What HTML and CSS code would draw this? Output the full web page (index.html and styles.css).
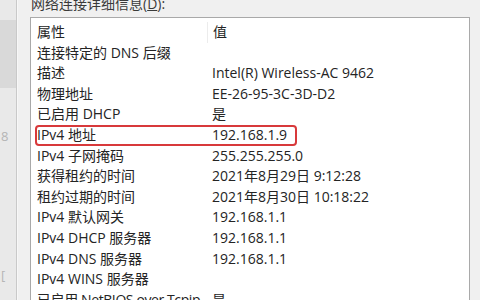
FILE: index.html
```html
<!DOCTYPE html>
<html lang="zh-CN">
<head>
    <meta charset="UTF-8">
    <title>网络连接详细信息</title>
    <link rel="stylesheet" href="styles.css">
</head>
<body>
    <div class="backdrop">
        <div class="backdrop-band"></div>
        <span class="ghost ghost-top">8</span>
        <span class="ghost ghost-bottom">[</span>
    </div>

    <div class="dialog">
        <div class="caption">网络连接详细信息(<u>D</u>):</div>

        <div class="listbox">
            <div class="row head">
                <span class="name">属性</span>
                <span class="value">值</span>
            </div>
            <div class="row"><span class="name">连接特定的 DNS 后缀</span><span class="value"></span></div>
            <div class="row"><span class="name">描述</span><span class="value">Intel(R) Wireless-AC 9462</span></div>
            <div class="row"><span class="name">物理地址</span><span class="value">EE-26-95-3C-3D-D2</span></div>
            <div class="row"><span class="name">已启用 DHCP</span><span class="value">是</span></div>
            <div class="row marked"><span class="name">IPv4 地址</span><span class="value">192.168.1.9</span></div>
            <div class="row"><span class="name">IPv4 子网掩码</span><span class="value">255.255.255.0</span></div>
            <div class="row"><span class="name">获得租约的时间</span><span class="value">2021年8月29日 9:12:28</span></div>
            <div class="row"><span class="name">租约过期的时间</span><span class="value">2021年8月30日 10:18:22</span></div>
            <div class="row"><span class="name">IPv4 默认网关</span><span class="value">192.168.1.1</span></div>
            <div class="row"><span class="name">IPv4 DHCP 服务器</span><span class="value">192.168.1.1</span></div>
            <div class="row"><span class="name">IPv4 DNS 服务器</span><span class="value">192.168.1.1</span></div>
            <div class="row"><span class="name">IPv4 WINS 服务器</span><span class="value"></span></div>
            <div class="row"><span class="name narrow">已启用 NetBIOS over Tcpip</span><span class="value">是</span></div>
        </div>
    </div>
</body>
</html>
```

FILE: styles.css
```css
body {
    margin: 0;
    height: 300px;
    overflow: hidden;
    display: flex;
    background: #f0f0f0;
    font-family: "Open Sans", "Noto Sans CJK SC", sans-serif;
    font-size: 14px;
    color: #242424;
}

/* window behind the dialog, left edge */
.backdrop {
    position: relative;
    width: 16px;
    flex-shrink: 0;
    background: #e9e9e9;
    border-right: 1px solid #c9c9c9;
}

.backdrop-band {
    margin-top: 20px;
    height: 68px;
    background: #d9d9d9;
}

.ghost {
    position: absolute;
    left: 1px;
    color: #b5b5b5;
    font-size: 13px;
}

.ghost-top {
    top: 127px;
}

.ghost-bottom {
    top: 266px;
}

.dialog {
    flex: 1;
    display: flex;
    flex-direction: column;
    overflow: hidden;
    padding-left: 12px;
    padding-right: 10px;
    border-left: 1px solid #f7f7f7;
}

.caption {
    flex-shrink: 0;
    height: 14px;
    line-height: 12px;
    padding-left: 1px;
    color: #3a3a3a;
    margin-top: -2px;
    margin-bottom: 5px;
}

.listbox {
    flex: 1;
    width: 438px;
    overflow: hidden;
    padding-top: 4px;
    background: #fff;
    border: 1px solid #a9a9a9;
    border-bottom: none;
}

.row {
    position: relative;
    display: flex;
    height: 20.6px;
    line-height: 20.6px;
    white-space: nowrap;
}

.name {
    width: 170px;
    padding-left: 6px;
    flex-shrink: 0;
    overflow: hidden;
}

.narrow {
    letter-spacing: -0.4px;
}

.value {
    padding-left: 5px;
}

.head .value {
    border-left: 1px solid #ececec;
}

.marked::after {
    content: "";
    position: absolute;
    left: 4px;
    top: 0;
    width: 258px;
    height: 17px;
    border: 2px solid #d8393b;
    border-radius: 4px;
}
```
